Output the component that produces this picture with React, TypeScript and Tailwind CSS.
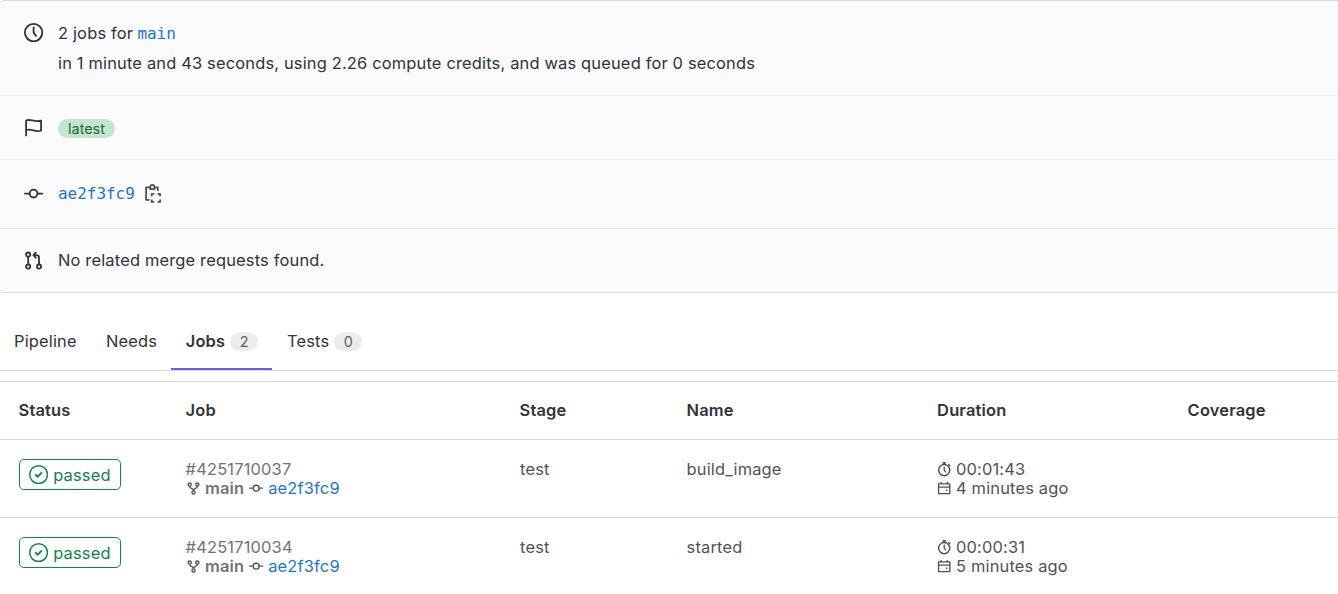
import type { ReactNode } from "react";

type IconProps = { className?: string; children: ReactNode };

function Icon({ className = "", children }: IconProps) {
  return (
    <svg viewBox="0 0 16 16" fill="none" stroke="currentColor" strokeWidth="1.5" className={`shrink-0 ${className}`}>
      {children}
    </svg>
  );
}

const ClockIcon = ({ className }: { className: string }) => (
  <Icon className={className}>
    <circle cx="8" cy="8" r="7.25" />
    <path d="M8 3.75V8l2.1 2.7" strokeLinecap="round" strokeLinejoin="round" />
  </Icon>
);

const FlagIcon = ({ className }: { className: string }) => (
  <Icon className={className}>
    <path d="M1.75 14.5V2.1C5.5.3 8.2 4 14.25 2.2v8.2C9.5 12.4 6.5 8.4 1.75 10" strokeLinecap="round" strokeLinejoin="round" />
  </Icon>
);

const CommitIcon = ({ className }: { className: string }) => (
  <Icon className={className}>
    <circle cx="8" cy="8" r="3.25" />
    <path d="M.75 8h4M11.25 8h4" strokeLinecap="round" />
  </Icon>
);

const MergeRequestIcon = ({ className }: { className: string }) => (
  <Icon className={className}>
    <circle cx="3.5" cy="3" r="1.75" />
    <circle cx="3.5" cy="13" r="1.75" />
    <circle cx="12.5" cy="13" r="1.75" />
    <path d="M3.5 4.75v6.5M12.5 11.25V5.5a2 2 0 0 0-2-2H8.5" />
    <path d="M9.8 1.4 7.9 3.5l1.9 2.1" strokeLinecap="round" strokeLinejoin="round" />
  </Icon>
);

const CopyIcon = ({ className }: { className: string }) => (
  <Icon className={className}>
    <path d="M4.8 2.75H1.75v10.5H4M9.2 2.75h2.3V5.2" strokeLinecap="round" strokeLinejoin="round" />
    <path d="M5.25 4.25V2.5a1.75 1.75 0 0 1 3.5 0v1.75z" />
    <path d="M6.4 10.3V8.25h2.1M11.3 8.25h2.1v2.05M13.4 12.9v2.05h-2.1M8.5 14.95H6.4V12.9" strokeLinejoin="round" />
  </Icon>
);

const ForkIcon = ({ className }: { className: string }) => (
  <Icon className={className}>
    <circle cx="3.3" cy="3.2" r="1.9" strokeWidth="1.7" />
    <circle cx="12.7" cy="3.2" r="1.9" strokeWidth="1.7" />
    <circle cx="8" cy="12.8" r="1.9" strokeWidth="1.7" />
    <path d="M3.3 5.1c0 3.8 4.7 1.6 4.7 5.8 0-4.2 4.7-2 4.7-5.8" strokeWidth="1.7" />
  </Icon>
);

const TimerIcon = ({ className }: { className: string }) => (
  <Icon className={className}>
    <circle cx="8" cy="9" r="6.2" strokeWidth="1.6" />
    <path d="M6.2 1h3.6M8 1v2" strokeWidth="1.8" />
    <path d="M8 5.7V9l1.5 2M13 2.8l1.3 1.3" strokeLinecap="round" />
  </Icon>
);

const CalendarIcon = ({ className }: { className: string }) => (
  <Icon className={className}>
    <path d="M1.75 3.25h12.5v10.75H1.75zM1.75 6.75h12.5M4.5 1v2.250M11.500 1v2.250" strokeLinejoin="round" />
    <path d="M10 10.300h1.600" />
  </Icon>
);

const SuccessIcon = ({ className }: { className: string }) => (
  <Icon className={className}>
    <circle cx="8" cy="8" r="7.4" strokeWidth="1.2" />
    <path d="m5.6 8.2 1.6 1.6 3.2-3.2" strokeLinecap="round" strokeLinejoin="round" />
  </Icon>
);

function Tab({ label, count, active, className }: { label: string; count?: number; active?: boolean; className: string }) {
  return (
    <div className={`flex h-[60px] items-center ${active ? "border-b-2 border-[#6666c4] pt-[4px] font-semibold" : "pt-[2px]"} ${className}`}>
      <span>{label}</span>
      {count !== undefined && (
        <span className="ml-[5px] flex h-[19px] w-7 items-center justify-center rounded-full bg-[#ececef] pt-px text-[14.4px] font-normal tracking-normal text-[#626168]">
          {count}
        </span>
      )}
    </div>
  );
}

const columns = "grid w-[1670px] shrink-0 grid-cols-[10%_20%_10%_15%_15%_30%]";

const jobs = [
  { id: "#4251710037", name: "build_image", duration: "00:01:43", finished: "4 minutes ago" },
  { id: "#4251710034", name: "started", duration: "00:00:31", finished: "5 minutes ago" },
];

export default function App() {
  return (
    <main className="h-[594px] w-[1338px] overflow-hidden bg-white font-['Inter',sans-serif] text-[16.45px] leading-[20px] tracking-[0.17px] text-[#333238]">
      <section className="h-[293px] rounded-l-[4px] border-y border-[#dcdcde] bg-[#fbfafd]">
        <div className="flex h-[95px] border-b border-[#ececef] pl-[24px] pt-[22px]">
          <ClockIcon className="size-[19.2px]" />
          <div className="-mt-[5px] ml-[14.8px] leading-[30px]">
            <p className="h-[30px]">
              2 jobs for <a className="-ml-[0.6px] font-['DejaVu_Sans_Mono',monospace] text-[16px] tracking-[-0.03px] text-[#1f75cb]">main</a>
            </p>
            <p>in 1 minute and 43 seconds, using 2.26 compute credits, and was queued for 0 seconds</p>
          </div>
        </div>
        <div className="flex h-16 items-center border-b border-[#ececef] pl-[24px]">
          <FlagIcon className="size-[19.2px]" />
          <span className="ml-[14.8px] mt-[2px] flex h-[19px] w-[57px] items-center justify-center rounded-full bg-[#c3e6cd] text-[14.4px] tracking-normal text-[#24663b]">latest</span>
        </div>
        <div className="flex h-[69px] items-center border-b border-[#ececef] pl-[24px]">
          <CommitIcon className="-mt-px size-[19.2px]" />
          <a className="ml-[14.8px] font-['DejaVu_Sans_Mono',monospace] text-[16px] tracking-[-0.03px] text-[#1f75cb]">ae2f3fc9</a>
          <CopyIcon className="ml-[9.5px] size-[19.2px] text-[#535158]" />
        </div>
        <div className="flex h-[63px] items-center pl-[24px]">
          <MergeRequestIcon className="mt-px size-[19.2px]" />
          <span className="-mt-px ml-[14.8px]">No related merge requests found.</span>
        </div>
      </section>

      <nav className="flex h-[78px] items-end border-b border-[#dcdcde]">
        <Tab label="Pipeline" className="w-[92px] pl-[14px]" />
        <Tab label="Needs" className="w-[79px] pl-[14px]" />
        <Tab label="Jobs" count={2} active className="w-[101px] pl-[14.7px]" />
        <Tab label="Tests" count={0} className="pl-[15px]" />
      </nav>

      <div className="mt-[10px] border-t border-[#dcdcde]">
        <div className={`${columns} h-[58px] items-center border-b border-[#dcdcde] pb-px font-semibold`}>
          {["Status", "Job", "Stage", "Name", "Duration", "Coverage"].map((title) => (
            <span key={title} className="pl-[18.6px]">{title}</span>
          ))}
        </div>
        {jobs.map((job) => (
          <div key={job.id} className={`${columns} h-[78px] border-b border-[#dcdcde] pt-[19px] leading-[19px] text-[#535158]`}>
            <div className="pl-[19px]">
              <span className="flex h-[31px] w-[102px] items-center rounded-[4.8px] border border-[#108548] pl-[9px] text-[#108548]">
                <SuccessIcon className="size-[19.2px]" />
                <span className="ml-[5px] mt-[2px]">passed</span>
              </span>
            </div>
            <div className="pl-[18.6px] pt-[1px] text-[#737278]">
              <p>{job.id}</p>
              <p className="flex items-center">
                <ForkIcon className="ml-px size-[13px] text-[#535158]" />
                <b className="ml-[5.4px] font-semibold">main</b>
                <CommitIcon className="ml-[4.5px] size-[14.4px] text-[#535158]" />
                <a className="ml-[5px] text-[#1f75cb]">ae2f3fc9</a>
              </p>
            </div>
            <span className="pl-[19px] pt-[1px]">test</span>
            <span className="pl-[18.6px] pt-[1px]">{job.name}</span>
            <div className="pl-[18.6px] pt-[1px]">
              <p className="flex items-center">
                <TimerIcon className="size-[14.4px]" />
                <span className="ml-[4.5px]">{job.duration}</span>
              </p>
              <p className="flex items-center">
                <CalendarIcon className="size-[14.4px]" />
                <span className="ml-[4.5px]">{job.finished}</span>
              </p>
            </div>
          </div>
        ))}
      </div>
    </main>
  );
}
